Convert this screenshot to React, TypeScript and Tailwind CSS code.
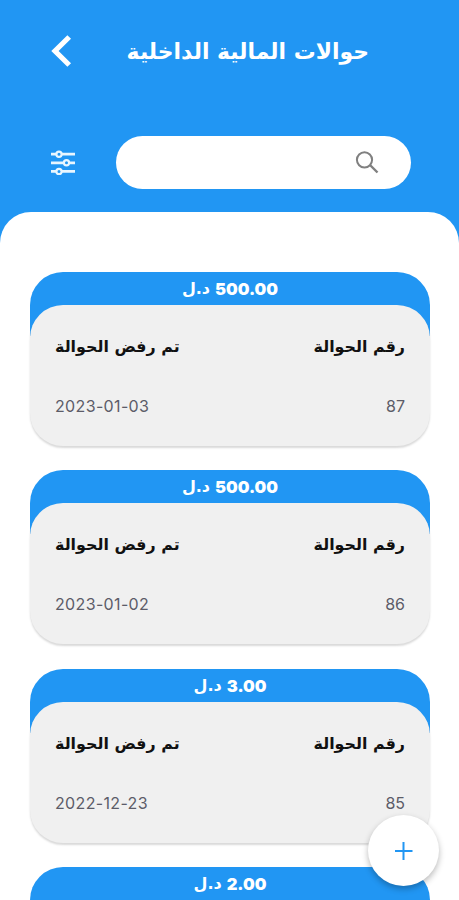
interface Transfer {
  amount: string;
  id?: string;
  date?: string;
}

const transfers: Transfer[] = [
  { amount: '500.00', id: '87', date: '2023-01-03' },
  { amount: '500.00', id: '86', date: '2023-01-02' },
  { amount: '3.00', id: '85', date: '2022-12-23' },
  { amount: '2.00' },
];

function TransferCard({ transfer }: { transfer: Transfer }) {
  return (
    <article className="h-[174.4px] shrink-0">
      <div className="flex h-[64px] items-start justify-center gap-[5px] rounded-t-[33px] bg-[#2196f3] text-white">
        <span className="mt-[5px] font-['Inter',sans-serif] text-[16.5px] leading-[24px] font-black">{transfer.amount}</span>
        <span className="mt-[5px] font-['DejaVu_Sans',sans-serif] text-[16px] leading-[24px] font-bold">د.ل</span>
      </div>
      <div className="-mt-[31px] flex h-[141px] flex-col rounded-[33px] bg-[#f0f0f0] px-[25px] pt-[29px] shadow-[0_2px_2px_rgba(0,0,0,0.15)]">
        {transfer.id && (
          <>
            <div className="flex justify-between font-['DejaVu_Sans',sans-serif] text-[15.9px] leading-[26px] font-bold whitespace-nowrap text-[#111]">
              <span>رقم الحوالة</span>
              <span>تم رفض الحوالة</span>
            </div>
            <div className="mt-[33px] flex justify-between font-['Inter',sans-serif] text-[16px] leading-[26px] text-[#5c5c68]">
              <span>{transfer.id}</span>
              <span dir="ltr" className="tracking-[0.35px]">{transfer.date}</span>
            </div>
          </>
        )}
      </div>
    </article>
  );
}

export default function App() {
  return (
    <main dir="rtl" className="relative flex h-[900px] w-[459px] flex-col overflow-hidden bg-[#2196f3]">
      <header className="h-[212px] shrink-0">
        <div className="flex h-[102px] items-center justify-between pr-[90px] pl-[51px]">
          <h1 className="pt-[2px] font-['DejaVu_Sans',sans-serif] text-[21.9px] leading-[40px] font-bold whitespace-nowrap text-white">حوالات المالية الداخلية</h1>
          <button aria-label="رجوع">
            <svg width="21" height="32" viewBox="0 0 21 32" fill="none" stroke="#fff" strokeWidth="5.200">
              <path d="M18.200 2 4 16l14.200 14" />
            </svg>
          </button>
        </div>
        <div className="mt-[34px] flex h-[53px] items-center pr-[48px]">
          <div className="flex h-[53px] w-[295px] items-center rounded-full bg-white pr-[32px]">
            <svg width="24" height="24" viewBox="0 0 24 24" fill="none" stroke="#808080" strokeWidth="2">
              <circle cx="9.500" cy="8.800" r="7.600" />
              <path d="m15 14 7.500 7.500" strokeWidth="2.400" />
            </svg>
          </div>
          <svg className="mr-[40px]" width="26" height="26" viewBox="0 0 26 26" fill="none" stroke="#e8f6ff" strokeWidth="2.800">
            <path d="M1 4.200h5m6 0h13M1 12.800h12.500m6 0H25M1 21.400h5m6 0h13" />
            <g strokeWidth="2.200">
              <circle cx="9" cy="4.200" r="2.600" />
              <circle cx="16.500" cy="12.800" r="2.600" />
              <circle cx="9" cy="21.400" r="2.600" />
            </g>
          </svg>
        </div>
      </header>
      <section className="flex min-h-0 flex-1 flex-col gap-[24px] overflow-hidden rounded-t-[31px] bg-white pt-[60px] pr-[29px] pl-[30px]">
        {transfers.map((transfer, index) => (
          <TransferCard key={index} transfer={transfer} />
        ))}
      </section>
      <button aria-label="إضافة" className="absolute top-[815px] left-[368px] flex size-[71px] items-center justify-center rounded-full bg-white shadow-[0_3px_6px_rgba(0,0,0,0.28)]">
        <svg width="18" height="18" viewBox="0 0 18 18" stroke="#2196f3" strokeWidth="2">
          <path d="M8.500 0v18M0 9h17.500" />
        </svg>
      </button>
    </main>
  );
}
